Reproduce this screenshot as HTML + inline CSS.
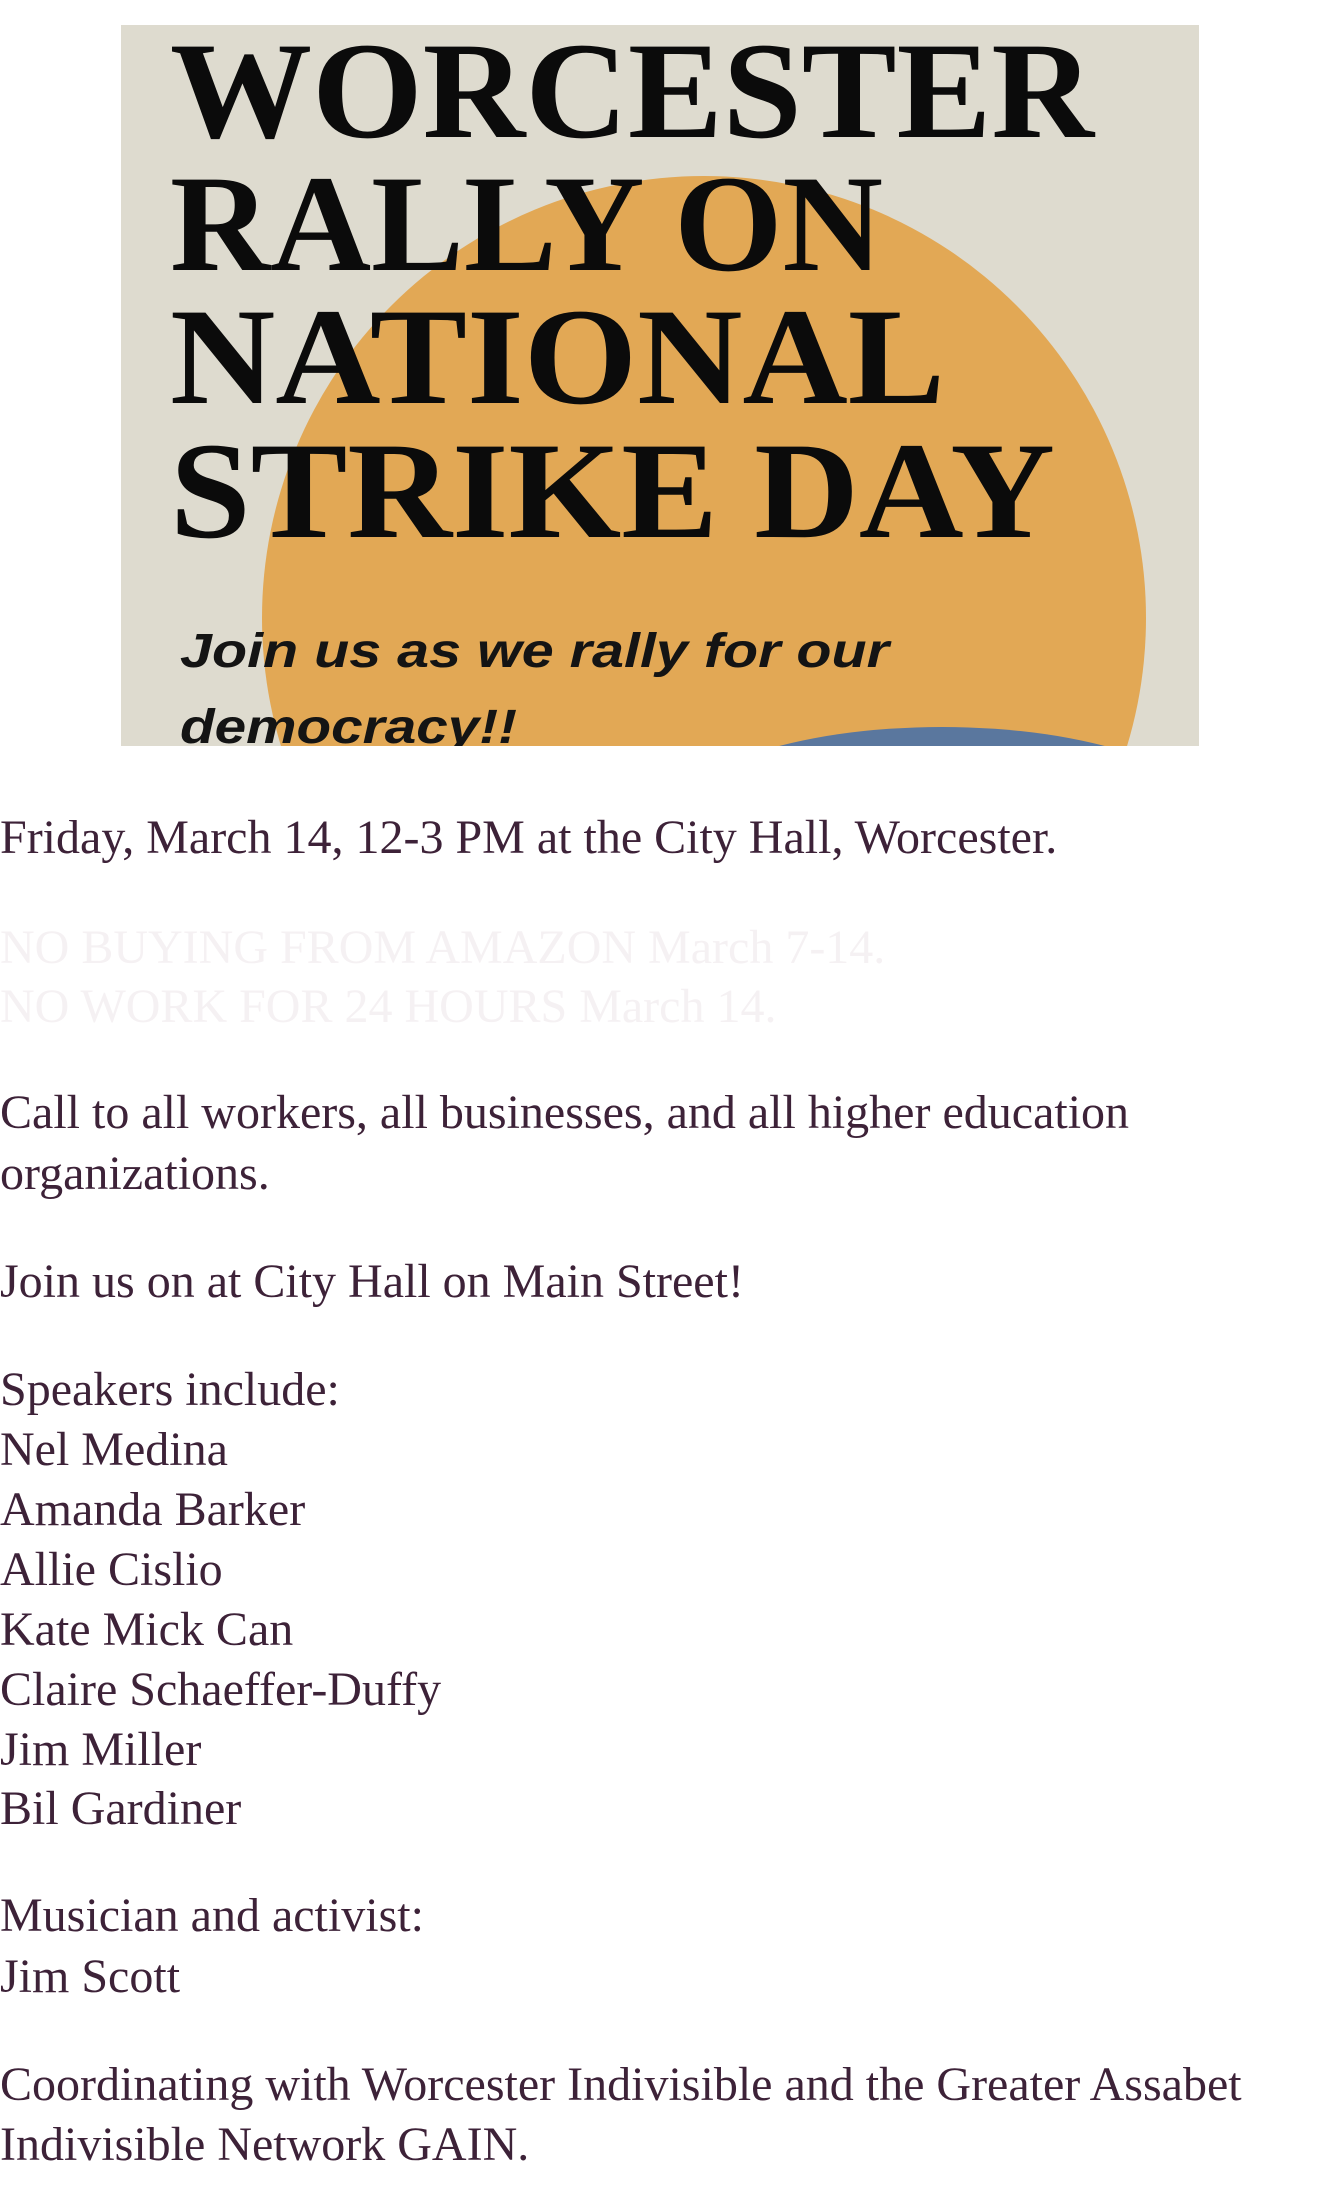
<!DOCTYPE html>
<html><head><meta charset="utf-8"><style>
html,body{margin:0;padding:0;background:#fff;width:1320px;height:2203px;overflow:hidden}
.t{position:absolute;left:0;font-family:"Liberation Serif",serif;font-size:48px;line-height:60px;color:#3d2238;white-space:nowrap;margin:0}
.f{color:#f5f1f3}
svg{position:absolute;left:121px;top:25px}
</style></head><body>
<svg width="1078" height="721" viewBox="0 0 1078 721">
<rect width="1078" height="721" fill="#dedbcf"/>
<circle cx="583" cy="593" r="442" fill="#e2a855"/>
<ellipse cx="821" cy="796" rx="270" ry="94" fill="#5a779e"/>
<g font-family="Liberation Serif,serif" font-weight="bold" font-size="138" fill="#0b0b0b">
<text x="49" y="112" textLength="924" lengthAdjust="spacingAndGlyphs">WORCESTER</text>
<text x="49" y="245" textLength="713" lengthAdjust="spacingAndGlyphs">RALLY ON</text>
<text x="49" y="378" textLength="775" lengthAdjust="spacingAndGlyphs">NATIONAL</text>
<text x="49" y="512" textLength="885" lengthAdjust="spacingAndGlyphs">STRIKE DAY</text>
</g>
<g font-family="Liberation Sans,sans-serif" font-weight="bold" font-style="italic" font-size="48" fill="#141414">
<text x="59" y="642" textLength="709" lengthAdjust="spacingAndGlyphs">Join us as we rally for our</text>
<text x="59" y="718" textLength="337" lengthAdjust="spacingAndGlyphs">democracy!!</text>
</g>
</svg>
<div class="t" style="top:808px">Friday, March 14, 12-3 PM at the City Hall, Worcester.</div>
<div class="t f" style="top:918px">NO BUYING FROM AMAZON March 7-14.</div>
<div class="t f" style="top:977px">NO WORK FOR 24 HOURS March 14.</div>
<div class="t" style="top:1083px">Call to all workers, all businesses, and all higher education</div>
<div class="t" style="top:1144px">organizations.</div>
<div class="t" style="top:1252px">Join us on at City Hall on Main Street!</div>
<div class="t" style="top:1360px">Speakers include:</div>
<div class="t" style="top:1420px">Nel Medina</div>
<div class="t" style="top:1480px">Amanda Barker</div>
<div class="t" style="top:1540px">Allie Cislio</div>
<div class="t" style="top:1600px">Kate Mick Can</div>
<div class="t" style="top:1660px">Claire Schaeffer-Duffy</div>
<div class="t" style="top:1720px">Jim Miller</div>
<div class="t" style="top:1779px">Bil Gardiner</div>
<div class="t" style="top:1886px">Musician and activist:</div>
<div class="t" style="top:1947px">Jim Scott</div>
<div class="t" style="top:2055px">Coordinating with Worcester Indivisible and the Greater Assabet</div>
<div class="t" style="top:2115px">Indivisible Network GAIN.</div>
</body></html>
